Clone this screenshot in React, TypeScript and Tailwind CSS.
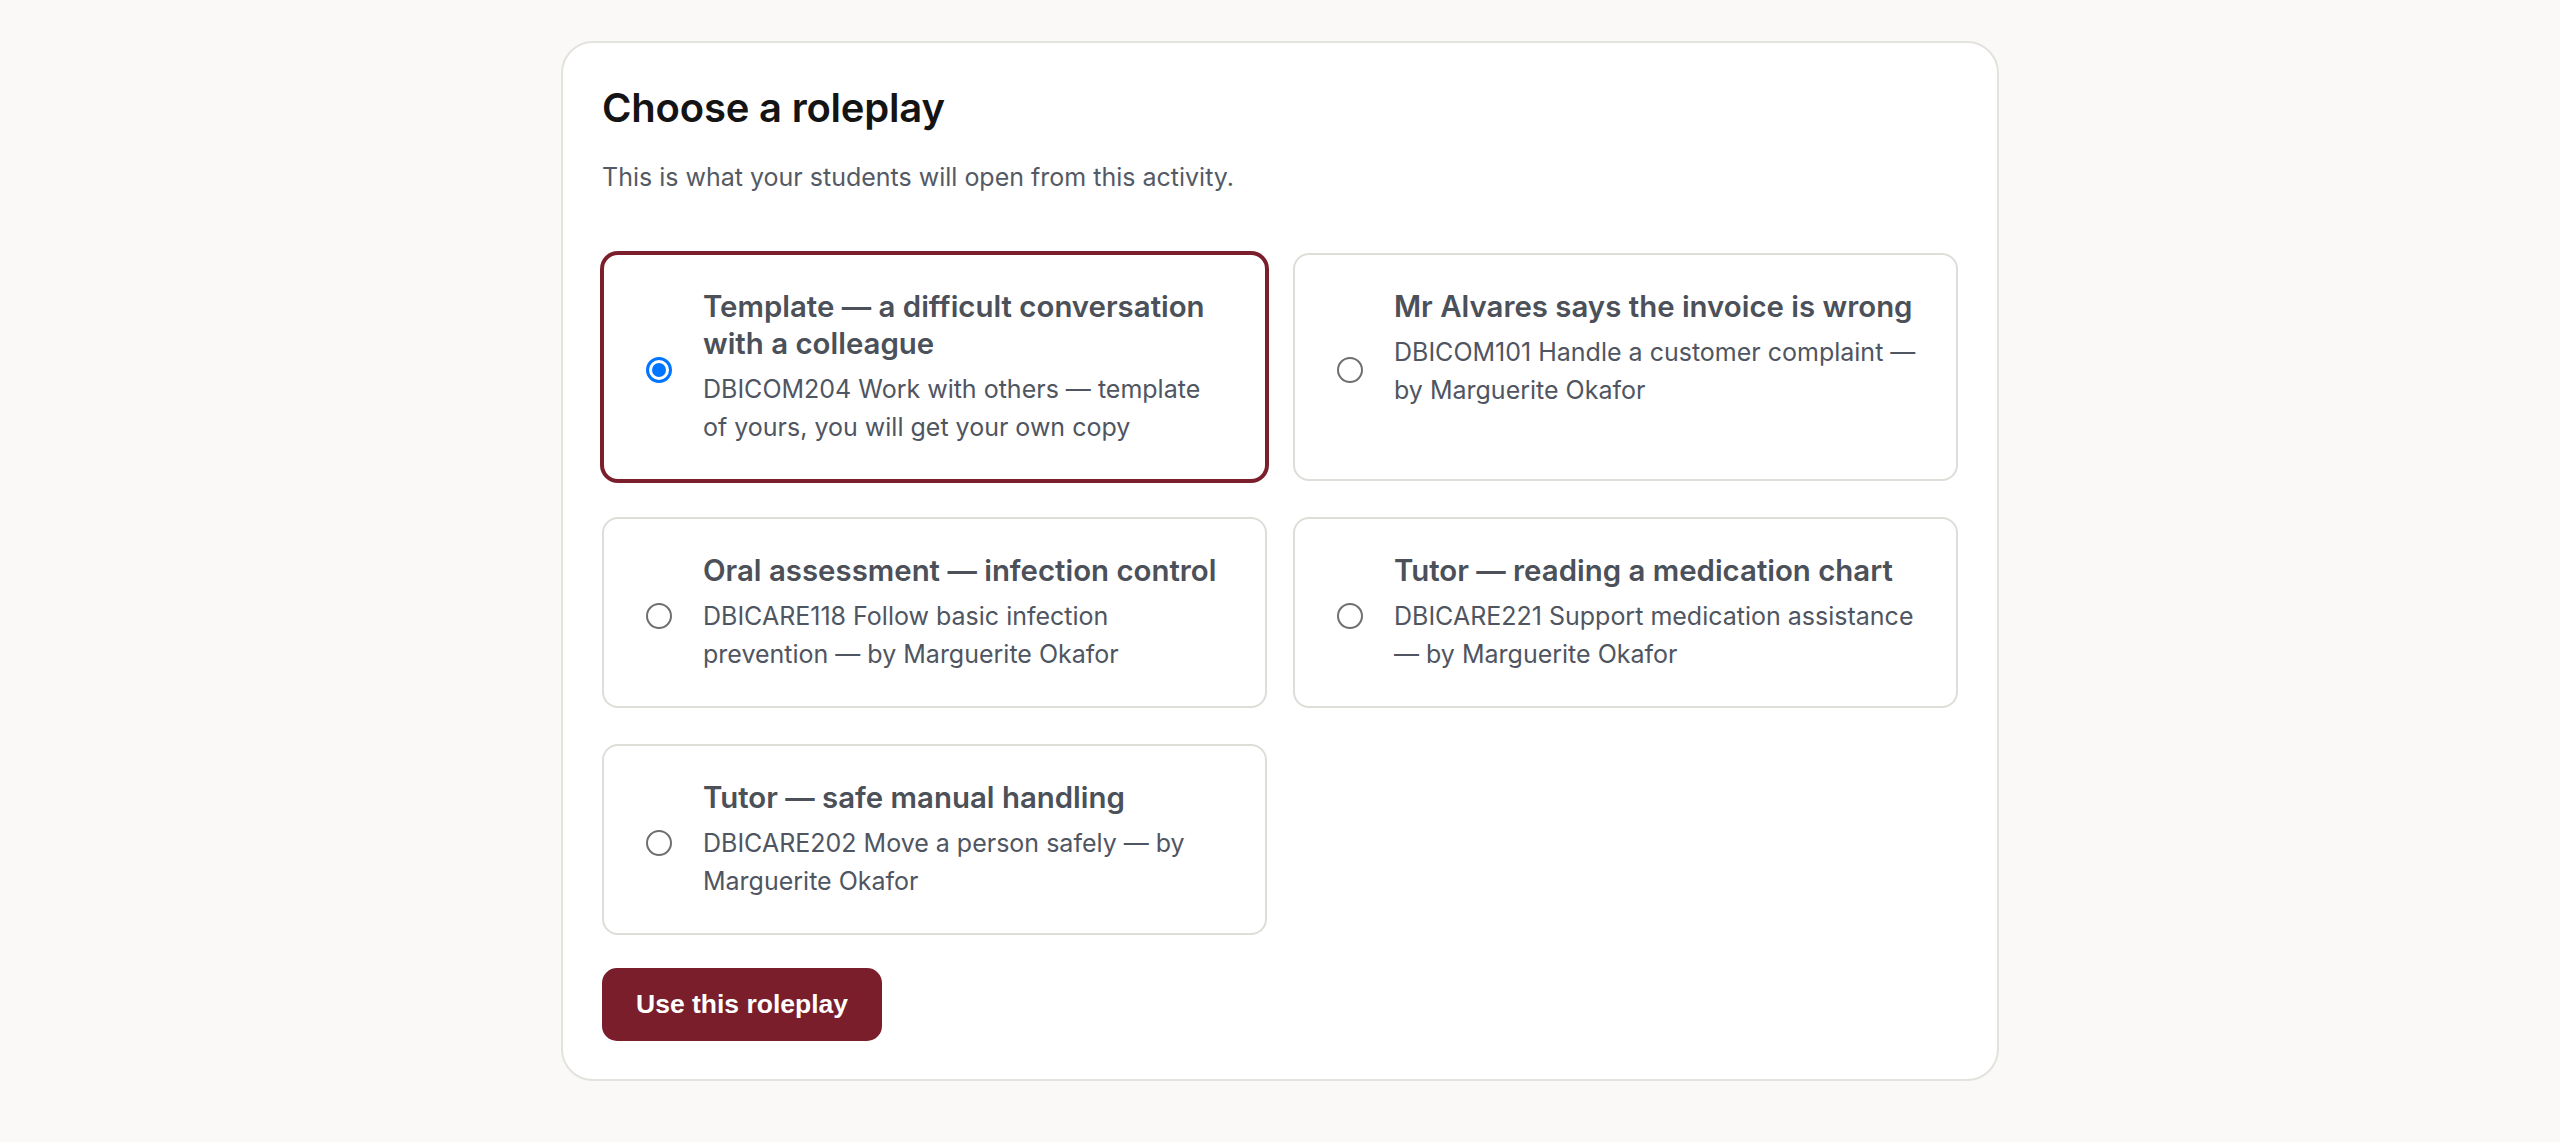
import React, { useState } from 'react';

interface Roleplay {
  id: string;
  title: string;
  detail: string[]; // lines, broken where the design breaks them
}

const roleplays: Roleplay[] = [
  {
    id: 'tpl',
    title: 'Template — a difficult conversation with a colleague',
    detail: ['DBICOM204 Work with others — template', 'of yours, you will get your own copy'],
  },
  {
    id: 'alvares',
    title: 'Mr Alvares says the invoice is wrong',
    detail: ['DBICOM101 Handle a customer complaint —', 'by Marguerite Okafor'],
  },
  {
    id: 'oral',
    title: 'Oral assessment — infection control',
    detail: ['DBICARE118 Follow basic infection', 'prevention — by Marguerite Okafor'],
  },
  {
    id: 'medchart',
    title: 'Tutor — reading a medication chart',
    detail: ['DBICARE221 Support medication assistance', '— by Marguerite Okafor'],
  },
  {
    id: 'handling',
    title: 'Tutor — safe manual handling',
    detail: ['DBICARE202 Move a person safely — by', 'Marguerite Okafor'],
  },
];

const Radio: React.FC<{ checked: boolean }> = ({ checked }) =>
  checked ? (
    <span className="mt-[6px] flex h-[26px] w-[26px] shrink-0 items-center justify-center rounded-full border-[3px] border-[#0075ff] bg-white">
      <span className="h-[14px] w-[14px] rounded-full bg-[#0075ff]" />
    </span>
  ) : (
    <span className="mt-[6px] h-[26px] w-[26px] shrink-0 rounded-full border-2 border-[#6f6f6f] bg-white" />
  );

const RoleplayCard: React.FC<{ item: Roleplay; selected: boolean; onSelect: () => void }> = ({
  item,
  selected,
  onSelect,
}) => (
  <label
    onClick={onSelect}
    className={
      selected
        ? 'flex cursor-pointer items-center gap-[31px] rounded-[16px] border-2 border-[#7b1f2c] bg-white py-[33px] pl-[42px] pr-[28px] ring-2 ring-[#7b1f2c]'
        : 'flex cursor-pointer items-center gap-[31px] rounded-[16px] border-2 border-[#dfddd8] bg-white py-[33px] pl-[42px] pr-[28px]'
    }
  >
    <Radio checked={selected} />
    <div className="self-start">
      <div className="text-[29.4px] font-semibold leading-[37px] text-[#4b5059]">{item.title}</div>
      <div className="mt-[8px] whitespace-nowrap text-[25px] leading-[38px] text-[#4f5561]">
        {item.detail.map((line, i) => (
          <React.Fragment key={i}>
            {i > 0 && <br />}
            {line}
          </React.Fragment>
        ))}
      </div>
    </div>
  </label>
);

export default function App() {
  const [selected, setSelected] = useState('tpl');

  return (
    <div className="min-h-screen bg-[#faf9f7] pt-[41px] font-['Inter','Liberation_Sans',sans-serif]">
      <div className="mx-auto w-[1438px] rounded-[32px] border-2 border-[#e4e2dd] bg-white px-[39px] pb-[38px] pt-[41px]">
        <h1 className="text-[40px] font-semibold leading-[48px] tracking-[-0.2px] text-[#141414]">
          Choose a roleplay
        </h1>
        <p className="mt-[26px] text-[25px] leading-[38px] text-[#545a64]">
          This is what your students will open from this activity.
        </p>

        <div className="mt-[57px] grid grid-cols-2 gap-x-[26px] gap-y-[36px]">
          {roleplays.map((r) => (
            <RoleplayCard
              key={r.id}
              item={r}
              selected={selected === r.id}
              onSelect={() => setSelected(r.id)}
            />
          ))}
        </div>

        <button
          type="button"
          className="mt-[33px] flex h-[73px] items-center rounded-[15px] bg-[#7a1e2b] px-[34px] font-['Liberation_Sans',Arial,sans-serif] text-[26.5px] font-bold text-white"
        >
          Use this roleplay
        </button>
      </div>
    </div>
  );
}
